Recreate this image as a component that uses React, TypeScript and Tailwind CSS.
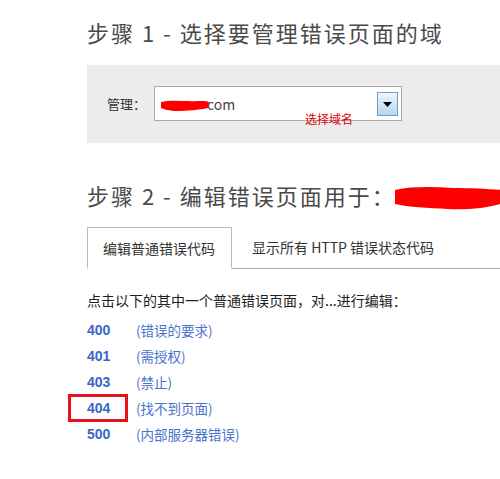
import React from 'react';

interface ErrorCode {
  code: string;
  label: string;
  marked?: boolean;
}

const codes: ErrorCode[] = [
  { code: '400', label: '(错误的要求)' },
  { code: '401', label: '(需授权)' },
  { code: '403', label: '(禁止)' },
  { code: '404', label: '(找不到页面)', marked: true },
  { code: '500', label: '(内部服务器错误)' },
];

const font = { fontFamily: '"Noto Sans CJK SC", "Noto Sans", sans-serif' };

const App: React.FC = () => {
  return (
    <div className="w-[500px] h-[479px] overflow-hidden bg-white pl-[87px] text-[#333]" style={font}>
      <h1 className="mt-[17px] h-[30px] leading-[30px] text-[22px] text-[#4a4a4a] tracking-[2px]">
        步骤 1 - 选择要管理错误页面的域
      </h1>

      {/* domain picker */}
      <div className="mt-[18px] h-[78px] bg-[#ececec] pl-[20px] pt-[21px] flex items-start">
        <span className="h-[35px] leading-[35px] text-[13px] w-[47px]">管理：</span>
        <div className="relative w-[248px] h-[35px] bg-white border border-[#a9a9a9] flex items-center pl-[52px]">
          <svg className="absolute left-[4px] top-[12px]" width="52" height="13" viewBox="0 0 52 13">
            <path d="M2 3 C10 1 20 2 30 2 C38 3 45 1 50 3 L49 9 C40 11 28 12 18 12 C10 12 5 10 2 9 Z" fill="#ff0000" />
          </svg>
          <span className="text-[14px] leading-[20px] text-[#444]">com</span>
          <div className="absolute right-[3px] top-[5px] w-[21px] h-[24px] border border-[#7b9bbd] bg-gradient-to-b from-[#eef6fd] to-[#b3d6f4] flex items-center justify-center">
            <svg width="9" height="5" viewBox="0 0 9 5">
              <path d="M0 0 L9 0 L4.5 5 Z" fill="#000" />
            </svg>
          </div>
          <span className="absolute left-[150px] top-[24px] text-[12px] leading-[16px] text-[#e00000]">选择域名</span>
        </div>
      </div>

      <div className="relative mt-[37px] h-[30px]">
        <h2 className="h-[30px] leading-[30px] text-[22px] text-[#4a4a4a] tracking-[2px]">
          步骤 2 - 编辑错误页面用于：
        </h2>
        <svg className="absolute left-[306px] top-[5px]" width="110" height="26" viewBox="0 0 110 26">
          <path d="M2 5 C20 1 40 2 60 3 C80 3 95 4 110 5 L110 18 C95 23 75 25 55 24 C35 23 15 22 2 19 Z" fill="#ff0000" />
        </svg>
      </div>

      {/* tabs */}
      <div className="mt-[17px] flex h-[42px] border-b border-[#aaa]">
        <div className="w-[145px] h-[42px] -mb-px border border-[#bbb] border-b-white bg-white flex items-center pl-[15px] text-[14px] text-[#333]">
          编辑普通错误代码
        </div>
        <div className="h-[41px] flex items-center pl-[20px] text-[14px] text-[#333]">
          显示所有 HTTP 错误状态代码
        </div>
      </div>

      <p className="mt-[21px] h-[20px] leading-[20px] text-[14px] text-[#222]">
        点击以下的其中一个普通错误页面，对...进行编辑：
      </p>

      <ul className="mt-[7px]">
        {codes.map((item) => (
          <li key={item.code} className="relative flex h-[26px] items-center">
            <span
              className="w-[49px] text-[14px] font-bold text-[#3a66c8]"
              style={{ fontFamily: '"Liberation Sans", Arial, sans-serif' }}
            >
              {item.code}
            </span>
            <span className="text-[13.5px] text-[#4a72cc]">{item.label}</span>
            {item.marked && (
              <span className="absolute left-[-19px] top-[-1px] w-[60px] h-[28px] border-[3px] border-[#e8101a]" />
            )}
          </li>
        ))}
      </ul>
    </div>
  );
};

export default App;
